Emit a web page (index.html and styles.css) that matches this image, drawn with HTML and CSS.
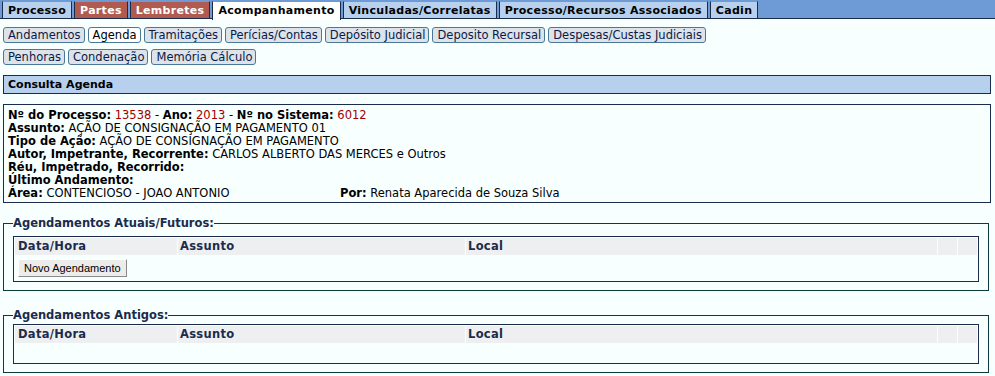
FILE: index.html
```html
<!DOCTYPE html>
<html lang="pt-BR">
<head>
    <meta charset="UTF-8">
    <title>Consulta Agenda</title>
    <link rel="stylesheet" href="styles.css">
</head>
<body>
    <div class="tabs">
        <span class="tab">Processo</span>
        <span class="tab tab-red">Partes</span>
        <span class="tab tab-red">Lembretes</span>
        <span class="tab tab-active">Acompanhamento</span>
        <span class="tab">Vinculadas/Correlatas</span>
        <span class="tab">Processo/Recursos Associados</span>
        <span class="tab">Cadin</span>
    </div>

    <div class="subtabs">
        <span class="subtab">Andamentos</span>
        <span class="subtab active">Agenda</span>
        <span class="subtab">Tramitações</span>
        <span class="subtab">Perícias/Contas</span>
        <span class="subtab">Depósito Judicial</span>
        <span class="subtab">Deposito Recursal</span>
        <span class="subtab">Despesas/Custas Judiciais</span>
    </div>
    <div class="subtabs">
        <span class="subtab">Penhoras</span>
        <span class="subtab">Condenação</span>
        <span class="subtab">Memória Cálculo</span>
    </div>

    <div class="page-title">Consulta Agenda</div>

    <div class="info">
        <div><b>Nº do Processo:</b> <span class="red">13538</span> - <b>Ano:</b> <span class="red">2013</span> - <b>Nº no Sistema:</b> <span class="red">6012</span></div>
        <div><b>Assunto:</b> AÇÃO DE CONSIGNAÇÃO EM PAGAMENTO 01</div>
        <div><b>Tipo de Ação:</b> AÇÃO DE CONSIGNAÇÃO EM PAGAMENTO</div>
        <div><b>Autor, Impetrante, Recorrente:</b> CARLOS ALBERTO DAS MERCES e Outros</div>
        <div><b>Réu, Impetrado, Recorrido:</b></div>
        <div><b>Último Andamento:</b></div>
        <div class="info-row">
            <span class="area"><b>Área:</b> CONTENCIOSO - JOAO ANTONIO</span>
            <span><b>Por:</b> Renata Aparecida de Souza Silva</span>
        </div>
    </div>

    <fieldset class="group">
        <legend>Agendamentos Atuais/Futuros:</legend>
        <div class="grid">
            <div class="grid-head">
                <span class="c-data">Data/Hora</span>
                <span class="c-assunto">Assunto</span>
                <span class="c-local">Local</span>
                <span class="c-x"></span>
                <span class="c-x"></span>
            </div>
            <div class="grid-body">
                <button class="btn">Novo Agendamento</button>
            </div>
        </div>
    </fieldset>

    <fieldset class="group group-old">
        <legend>Agendamentos Antigos:</legend>
        <div class="grid">
            <div class="grid-head">
                <span class="c-data">Data/Hora</span>
                <span class="c-assunto">Assunto</span>
                <span class="c-local">Local</span>
                <span class="c-x"></span>
                <span class="c-x"></span>
            </div>
            <div class="grid-body empty"></div>
        </div>
    </fieldset>
</body>
</html>
```

FILE: styles.css
```css
body {
    margin: 0;
    background: #f7ffff;
    font-family: Verdana, "DejaVu Sans", sans-serif;
    font-size: 11.5px;
    color: #000;
}
/* top tabs */
.tabs {
    display: flex;
    gap: 2px;
    padding: 1px 0 0 2px;
    background: #6e9ad6;
    border-bottom: 1px solid #1b2b4b;
    height: 17px;
}
.tab {
    display: block;
    padding: 1px 5px 0;
    background: #b7d0ee;
    border: 1px solid #1b2b4b;
    border-top-color: #6e9ad6;
    border-bottom: none;
    font-weight: bold;
    font-size: 11px;
    letter-spacing: 0.3px;
    line-height: 15px;
    color: #000;
}
.tab-red {
    background: #b05a50;
    color: #fff;
}
.tab-active {
    background: #fff;
    height: 17px;
}
/* sub tabs */
.subtabs {
    display: flex;
    gap: 3px;
    padding: 0 3px;
    margin-top: 8px;
}
.subtabs + .subtabs {
    margin-top: 6px;
}
.subtab {
    display: block;
    padding: 0 3px 0 4px;
    background: #dde3e8;
    border: 1px solid #4b7896;
    border-radius: 3px;
    line-height: 14px;
    color: #0a1a4a;
}
.subtab.active {
    background: #fff;
    color: #000;
}
/* title bar */
.page-title {
    margin: 10px 4px 0 3px;
    padding: 2px 4px;
    background: #b7d0ee;
    border: 1px solid #1b2b4b;
    font-size: 11px;
    font-weight: bold;
    line-height: 13px;
}
.info {
    margin: 10px 4px 0 3px;
    padding: 4px 4px 2px;
    border: 1px solid #1b2b4b;
    line-height: 13px;
}
.red {
    color: #a00000;
}
.info-row {
    display: flex;
}
.area {
    width: 332px;
}
/* agendamentos */
.group {
    margin: 13px 6px 0 3px;
    padding: 6px 9px 8px 9px;
    border: 1px solid #0c3a3a;
}
.group-old {
    margin-top: 17px;
    padding-top: 2px;
}
.group legend {
    padding: 0;
    font-weight: bold;
    color: #1b2b4b;
    line-height: 14px;
}
.grid {
    border: 1px solid #1b2b4b;
    padding: 1px;
}
.grid-head {
    display: flex;
    gap: 1px;
    font-weight: bold;
    color: #1b2b4b;
    line-height: 17px;
    letter-spacing: 0.3px;
}
.grid-head span {
    box-sizing: border-box;
    background: #eeeff1;
}
.c-data {
    width: 162px;
    padding-left: 3px;
}
.c-assunto {
    width: 287px;
    padding-left: 2px;
}
.c-local {
    flex: 1;
    padding-left: 2px;
}
.c-x { width: 19px; }
.grid-body {
    padding: 4px 3px 3px;
}
.grid-body.empty {
    height: 19px;
    padding: 0;
}
.btn {
    font-family: "Liberation Sans", Arial, sans-serif;
    font-size: 11px;
    padding: 1px 5px;
    background: #ececea;
    border: 1px solid;
    border-color: #fff #8a8a8a #8a8a8a #fff;
    color: #000;
    line-height: 14px;
}
```
